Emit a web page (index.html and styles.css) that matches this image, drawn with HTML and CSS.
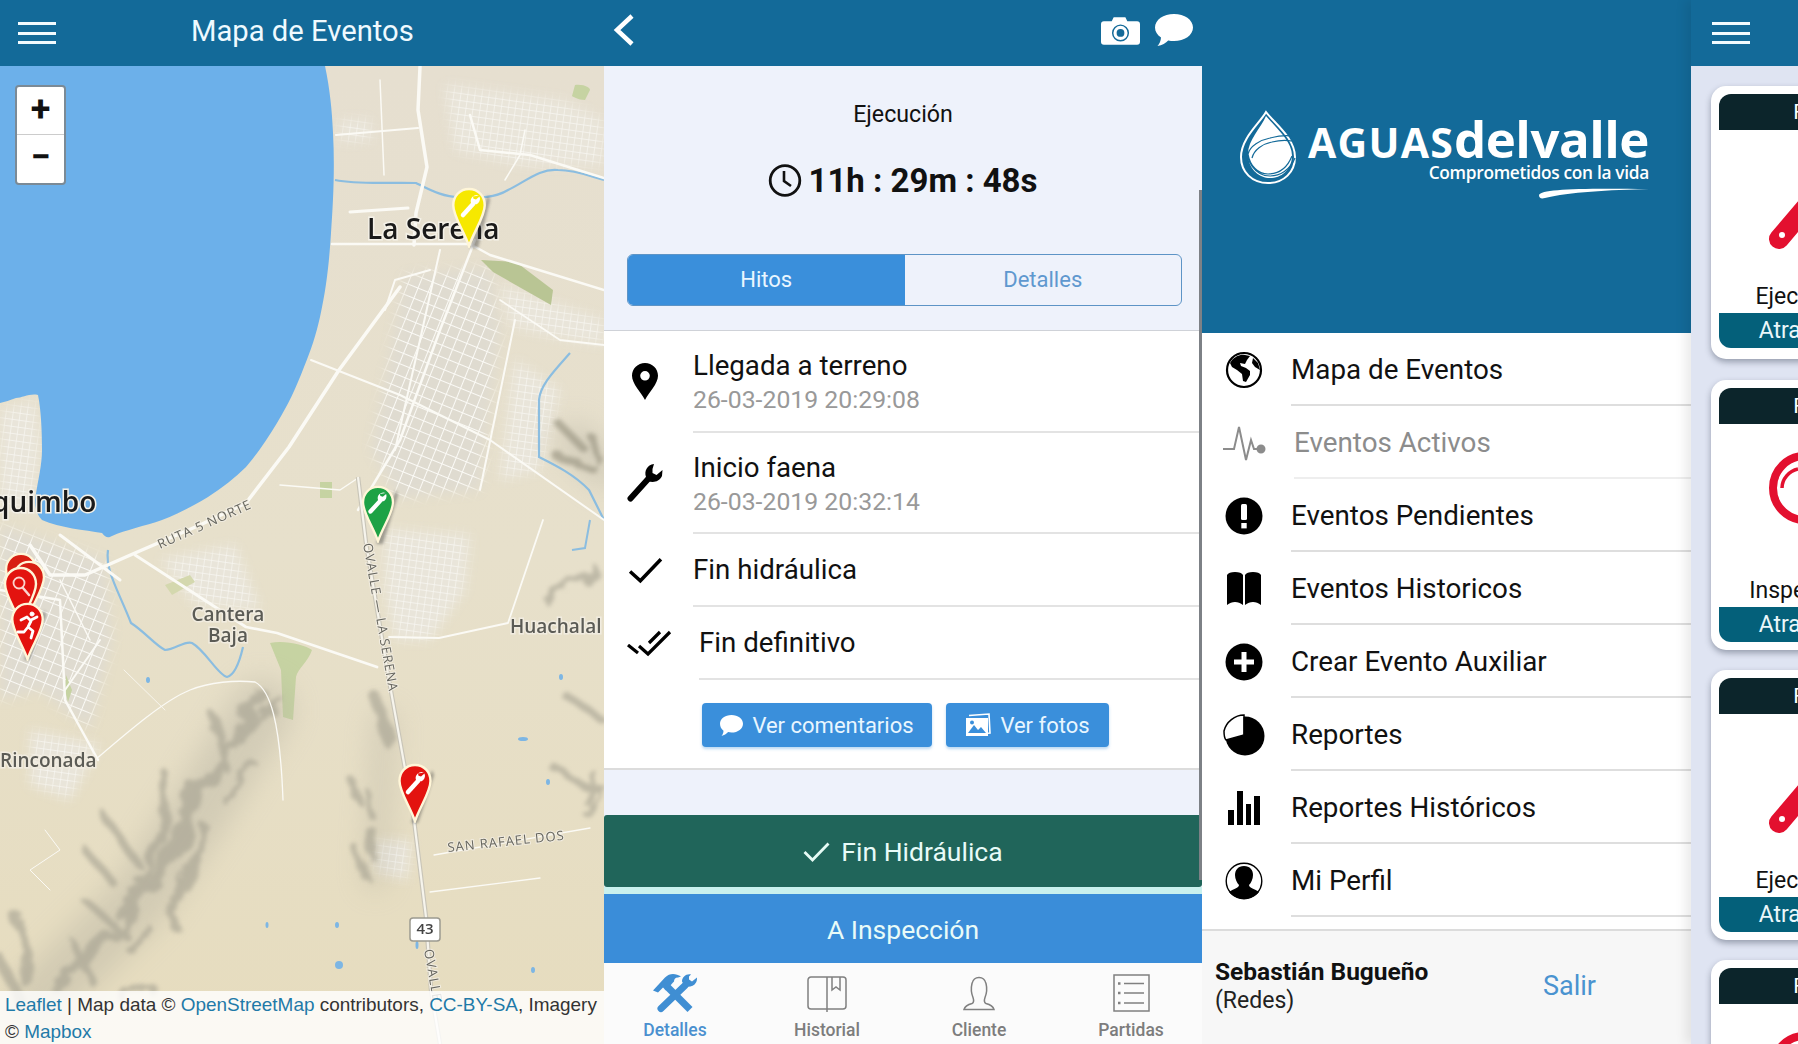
FILE: index.html
```html
<!DOCTYPE html>
<html lang="es">
<head>
  <meta charset="UTF-8">
  <title>Aguas del Valle</title>
  <link rel="stylesheet" href="styles.css">
</head>
<body>
  <svg class="defs" width="0" height="0">
    <defs>
      <symbol id="pin" viewBox="0 0 36 62">
        <path d="M18 2C8.500 2 2 9.500 2 18.500 2 30 13 45 18 60 23 45 34 30 34 18.500 34 9.500 27.500 2 18 2Z" stroke="#fff6d8" stroke-width="2.500"/>
      </symbol>
      <g id="pin-wrench">
        <path d="M11 29 21 18" stroke="#fff" stroke-width="4.500" stroke-linecap="round" fill="none"/>
        <path d="M27 9.500a6 6 0 0 0-8 7.500l5 1.500a6 6 0 0 0 3.500-8l-3.500 3-2.500-.8-.5-2.200Z" fill="#fff"/>
      </g>
      <symbol id="card-wrench" viewBox="0 0 100 100">
        <path d="M24 82 70 28" stroke="#e3102f" stroke-width="20" stroke-linecap="round"/>
        <circle cx="27" cy="78" r="3" fill="#fff"/>
      </symbol>
    </defs>
  </svg>

  <div class="screen">
    <!-- mapa -->
    <section class="panel-map">
      <header class="topbar">
        <div class="burger"><span></span><span></span><span></span></div>
        <h1 class="map-title">Mapa de Eventos</h1>
      </header>
      <div class="map">
        <svg class="map-canvas" viewBox="0 66 604 978" width="604" height="978">
          <defs>
            <linearGradient id="land" x1="0" y1="0" x2="0" y2="1">
              <stop offset="0" stop-color="#e6dfd0"/>
              <stop offset=".5" stop-color="#e7e0cb"/>
              <stop offset="1" stop-color="#e6dcbe"/>
            </linearGradient>
            <pattern id="grid" width="11" height="11" patternUnits="userSpaceOnUse" patternTransform="rotate(22)">
              <rect width="11" height="11" fill="#dfdbd0"/>
              <path d="M0 0H11M0 0V11" stroke="#fbfaf6" stroke-width="2"/>
            </pattern>
            <pattern id="grid-fine" width="7" height="7" patternUnits="userSpaceOnUse" patternTransform="rotate(8)">
              <rect width="7" height="7" fill="#e9e5da"/>
              <path d="M0 0H7M0 0V7" stroke="#f8f7f2" stroke-width="1.400"/>
            </pattern>
            <filter id="edge"><feGaussianBlur stdDeviation="6"/></filter>
            <mask id="city-mask" maskUnits="userSpaceOnUse" x="0" y="66" width="604" height="978">
              <g fill="#fff" filter="url(#edge)">
                <path d="M405 275 490 268 500 330 480 490 398 498 372 450Z"/>
                <path d="M0 525 105 560 112 640 90 730 40 690 0 700Z"/>
              </g>
            </mask>
            <mask id="fine-mask" maskUnits="userSpaceOnUse" x="0" y="66" width="604" height="978">
              <g fill="#fff" filter="url(#edge)">
                <path d="M445 85 560 100 604 120 604 165 520 165 455 150Z"/>
                <path d="M500 285 604 320 604 345 545 335 510 325Z"/>
                <path d="M385 530 470 535 465 590 430 640 395 640 385 590Z"/>
                <path d="M160 560 235 545 260 610 195 605Z"/>
                <path d="M0 410 35 400 40 450 32 510 0 510Z"/>
                <path d="M30 730 100 745 70 800 30 785Z"/>
                <path d="M375 840 412 840 408 880 375 872Z"/>
                <path d="M340 120 370 120 372 140 340 142Z"/>
                <path d="M515 360 560 390 540 470 500 480Z"/>
              </g>
            </mask>
            <filter id="hill" x="-10%" y="-10%" width="120%" height="120%">
              <feTurbulence type="fractalNoise" baseFrequency=".035" numOctaves="3" seed="4" result="n"/>
              <feDisplacementMap in="SourceGraphic" in2="n" scale="26" result="d"/>
              <feGaussianBlur in="d" stdDeviation="2.200"/>
            </filter>
            <filter id="hill-wide" x="-10%" y="-10%" width="120%" height="120%"><feGaussianBlur stdDeviation="14"/></filter>
            <filter id="pin-shadow"><feGaussianBlur stdDeviation="1.500"/></filter>
          </defs>

          <rect x="0" y="66" width="604" height="978" fill="url(#land)"/>

          <!-- barrios -->
          <rect x="0" y="66" width="604" height="978" fill="url(#grid)" mask="url(#city-mask)"/>
          <rect x="0" y="66" width="604" height="978" fill="url(#grid-fine)" mask="url(#fine-mask)"/>

          <!-- verdes -->
          <g fill="#c6d3a2">
            <path d="M270 643C285 640 305 645 312 650 308 662 298 668 296 677L293 720 283 717 281 670Z"/>
            <path d="M481 260 516 262 553 290 551 305 493 272Z" fill="#b9c594"/>
            <path d="M320 482h12v16h-12Z"/>
            <path d="M575 85C585 84 590 88 590 90L585 100C578 100 572 96 572 96Z"/>
            <path d="M66 675 72 690 68 702 65 690Z"/>
            <path d="M165 585 190 575 195 582 172 595Z" fill="#d4d8ae"/>
          </g>

          <!-- cerros -->
          <g fill="none" stroke="#b5b1a0" stroke-linecap="round" stroke-linejoin="round" filter="url(#hill-wide)" opacity=".4">
            <path d="M262 710 200 810 140 900 40 1000" stroke-width="62"/>
            <path d="M575 440 604 470" stroke-width="36"/>
            <path d="M385 720 375 880" stroke-width="22"/>
          </g>
          <g fill="none" stroke="#a6a292" stroke-linecap="round" stroke-linejoin="round" filter="url(#hill)" opacity=".62">
            <path d="M262 695 232 745 195 800 160 870 110 935 55 985" stroke-width="13"/>
            <path d="M212 715 228 770M240 740 280 700M250 760 225 800" stroke-width="7"/>
            <path d="M160 770 165 830 140 880" stroke-width="10"/>
            <path d="M108 820 135 860M85 850 115 885" stroke-width="8"/>
            <path d="M205 830 190 870 170 920" stroke-width="12"/>
            <path d="M90 905 125 935M70 940 95 985M130 950 150 930" stroke-width="7"/>
            <path d="M20 920 30 985M0 960 20 1000" stroke-width="12"/>
            <path d="M125 1000 150 985" stroke-width="8"/>
            <path d="M378 700 392 745" stroke-width="12"/>
            <path d="M352 780 358 800M366 790 370 815" stroke-width="6"/>
            <path d="M358 850 368 880M372 830 375 860" stroke-width="7"/>
            <path d="M560 425 580 445M585 430 600 462M555 455 595 470" stroke-width="8" stroke="#96927f"/>
            <path d="M548 600 595 570" stroke-width="9"/>
            <path d="M565 695 604 722" stroke-width="8"/>
            <path d="M555 770 604 790 585 812M590 770 585 800" stroke-width="7"/>
          </g>

          <!-- rios -->
          <g fill="none" stroke="#8bbde0" stroke-width="2.200">
            <path d="M335 180C360 185 390 182 416 183 430 190 445 198 462 197 480 198 495 198 508 190 525 182 540 168 558 170 575 170 590 176 604 180"/>
            <path d="M570 353C555 370 540 385 539 400L539 457C555 465 575 475 589 490L604 520"/>
            <path d="M108 550C105 570 118 590 131 623 145 632 155 645 165 650 175 650 185 640 192 643 205 650 218 675 227 677 235 675 240 660 243 647"/>
            <path d="M590 520 585 548 572 550" stroke-width="2"/>
          </g>
          <g fill="#7db6e4">
            <ellipse cx="339" cy="965" rx="4" ry="4"/>
            <ellipse cx="337" cy="925" rx="2" ry="3"/>
            <ellipse cx="523" cy="739" rx="5" ry="2"/>
            <ellipse cx="548" cy="782" rx="2" ry="3"/>
            <ellipse cx="561" cy="677" rx="2" ry="3"/>
            <ellipse cx="533" cy="970" rx="2" ry="3"/>
            <ellipse cx="148" cy="680" rx="2" ry="3"/>
            <ellipse cx="267" cy="925" rx="1.500" ry="3"/>
            <ellipse cx="417" cy="945" rx="1.500" ry="4"/>
          </g>

          <!-- mar -->
          <path fill="#6cb0ea" d="M0 66H325C330 90 332 110 333 133 335 170 333 205 331 233 329 265 326 290 320 317 316 335 311 350 304 367 296 388 288 405 277 423 268 438 258 453 246 467 235 478 222 488 208 497 195 505 178 514 162 520 145 526 125 530 112 536 108 538 106 538 102 533 85 530 60 528 42 520 37 515 35 508 35 500 38 480 42 465 42 450 42 430 41 410 38 395 30 393 22 398 16 398 10 400 5 402 0 403Z"/>

          <!-- caminos -->
          <g fill="none" stroke="#fbfaf5" stroke-linecap="round" stroke-linejoin="round">
            <path d="M400 287 339 370 289 447 246 503 200 525 135 553 85 575 50 575 30 545" stroke-width="3.500"/>
            <path d="M420 67 418 110 427 167 416 213 414 245" stroke-width="3.500"/>
            <path d="M332 244H470L490 255 604 290" stroke-width="2.500"/>
            <path d="M336 135 418 128" stroke-width="2.200"/>
            <path d="M380 80 384 175" stroke-width="1.500"/>
            <path d="M470 115 480 150 530 155 604 178" stroke-width="2.500"/>
            <path d="M525 130 520 155 505 180" stroke-width="1.500"/>
            <path d="M350 212 408 208" stroke-width="3"/>
            <path d="M311 360 400 395 490 440 604 520" stroke-width="2"/>
            <path d="M475 240 440 330 400 440 358 510" stroke-width="2.500"/>
            <path d="M515 320 480 490" stroke-width="2"/>
            <path d="M440 250 420 340 395 450" stroke-width="2"/>
            <path d="M430 270 395 280 385 310" stroke-width="2"/>
            <path d="M500 300 560 340 604 345" stroke-width="1.800"/>
            <path d="M280 485 340 490 358 478" stroke-width="1.500"/>
            <path d="M135 555 246 627 277 633 377 667" stroke-width="2.800"/>
            <path d="M389 637 439 638 508 623 543 520" stroke-width="1.800"/>
            <path d="M0 590 60 600 65 700 98 760" stroke-width="2.500"/>
            <path d="M95 760C130 730 165 700 190 690 210 682 235 680 255 682 270 690 280 720 283 800" stroke-width="1.300"/>
            <path d="M100 640 65 690" stroke-width="2"/>
            <path d="M60 535 120 580" stroke-width="3"/>
            <path d="M60 580 90 640" stroke-width="1.500"/>
            <path d="M434 855 590 828M430 892 540 878" stroke-width="1.300"/>
            <path d="M124 670 165 710" stroke-width=".8"/>
            <path d="M45 830 60 850 30 870 50 890" stroke-width="1"/>
          </g>
          <path d="M358 477 366 543 389 680 404 763 414 820 426 917 431 990 440 1044" fill="none" stroke="#c9c5b8" stroke-width="4.500"/>
          <path d="M358 477 366 543 389 680 404 763 414 820 426 917 431 990 440 1044" fill="none" stroke="#f6f4ec" stroke-width="2.200"/>

          <!-- nombres -->
          <g class="map-label-city">
            <text x="367" y="239">La Serena</text>
            <text x="-8" y="512">quimbo</text>
          </g>
          <g class="map-label-town">
            <text x="228" y="621" text-anchor="middle">Cantera</text>
            <text x="228" y="642" text-anchor="middle">Baja</text>
            <text x="510" y="633">Huachalal</text>
            <text x="0" y="767">Rinconada</text>
          </g>
          <g class="map-label-road">
            <text transform="translate(160 549) rotate(-24)">RUTA 5 NORTE</text>
            <text transform="translate(363 544) rotate(80)">OVALLE — LA SERENA</text>
            <text transform="translate(448 852) rotate(-6)">SAN RAFAEL DOS</text>
            <text transform="translate(424 950) rotate(80)">OVALLE</text>
          </g>
          <rect x="410" y="918" width="30" height="23" rx="3" fill="#fff" stroke="#9c9a90" stroke-width="1.500"/>
          <text class="map-shield" x="425" y="934" text-anchor="middle">43</text>

          <!-- marcadores -->
          <g fill="#333" opacity=".4" filter="url(#pin-shadow)">
            <path d="M490 200 478 248 470 248 488 195Z"/>
            <path d="M398 495 383 544 376 544 396 490Z"/>
            <path d="M434 775 418 823 411 823 432 770Z"/>
            <path d="M46 615 30 660 24 660 44 610Z"/>
          </g>
          <use href="#pin" x="4" y="552" width="34" height="58" fill="#d81f12"/>
          <use href="#pin" x="12" y="560" width="34" height="58" fill="#d81f12"/>
          <use href="#pin" x="3" y="566" width="35" height="60" fill="#e3130f"/>
          <circle cx="19" cy="583" r="5.500" fill="none" stroke="#fbd5cf" stroke-width="1.800"/>
          <path d="M23 588 29 595" stroke="#fbd5cf" stroke-width="2.500" stroke-linecap="round"/>
          <use href="#pin" x="10" y="602" width="35" height="59" fill="#e3130f"/>
          <g fill="none" stroke="#fff" stroke-width="2.800" stroke-linecap="round" stroke-linejoin="round">
            <circle cx="32" cy="614" r="2" fill="#fff" stroke-width="1"/>
            <path d="M21 620 27 617 31 621 28 627 33 631 31 638M28 627 24 632 18 632M31 620 37 617"/>
          </g>
          <use href="#pin" x="450" y="187" width="38" height="61" fill="#f6e800"/>
          <use href="#pin" x="360" y="485" width="36" height="58" fill="#1ea245"/>
          <use href="#pin" x="397" y="763" width="36" height="60" fill="#e3130f"/>
          <use href="#pin-wrench" transform="translate(452 186)"/>
          <use href="#pin-wrench" transform="translate(360 484) scale(.95)"/>
          <use href="#pin-wrench" transform="translate(397 763)"/>
        </svg>
        <div class="zoom-box">
          <div class="zoom-btn">+</div>
          <div class="zoom-btn">&minus;</div>
        </div>
        <div class="attribution">
          <a>Leaflet</a> | Map data © <a>OpenStreetMap</a> contributors, <a>CC-BY-SA</a>, Imagery<br>© <a>Mapbox</a>
        </div>
      </div>
    </section>

    <!-- detalle del evento -->
    <section class="panel-detail">
      <header class="topbar topbar-detail">
        <svg width="22" height="32" viewBox="0 0 22 32"><path d="M19 2 4 16l15 14" fill="none" stroke="#fff" stroke-width="4.500"/></svg>
        <div class="topbar-actions">
          <svg width="39" height="29" viewBox="0 0 40 29">
            <path d="M3 5h8l2-4h12l2 4h10a3 3 0 0 1 3 3v18a3 3 0 0 1-3 3H3a3 3 0 0 1-3-3V8a3 3 0 0 1 3-3Z" fill="#fff"/>
            <circle cx="20" cy="17" r="8" fill="none" stroke="#136a99" stroke-width="1.500"/>
            <circle cx="20" cy="17" r="4" fill="#136a99"/>
          </svg>
          <svg width="38" height="32" viewBox="0 0 38 32">
            <path d="M19 0c10.500 0 19 5.800 19 13.500S29.500 27 19 27c-2 0-4-.2-5.800-.6C11 28.800 7 31.500 2.500 32c2-2 3.300-5 3.500-8.500C2.300 21 0 17.500 0 13.500 0 5.800 8.500 0 19 0Z" fill="#fff"/>
          </svg>
        </div>
      </header>

      <div class="status-box">
        <div class="status-name">Ejecución</div>
        <div class="timer">
          <svg width="34" height="33" viewBox="0 0 34 33"><circle cx="17" cy="16.500" r="14.800" fill="none" stroke="#111" stroke-width="2.800"/><path d="M16 7v10l7 5" fill="none" stroke="#111" stroke-width="2.600"/></svg>
          <span>11h : 29m : 48s</span>
        </div>
        <div class="segment">
          <div class="segment-item segment-on">Hitos</div>
          <div class="segment-item">Detalles</div>
        </div>
      </div>

      <ul class="milestones">
        <li class="milestone milestone-tall">
          <div class="milestone-icon">
            <svg width="26" height="37" viewBox="0 0 26 37"><path fill-rule="evenodd" d="M13 0C5.800 0 0 5.500 0 12.800 0 21 9 29 13 37c4-8 13-16 13-24.200C26 5.500 20.200 0 13 0Zm0 8a4.800 4.800 0 1 1 0 9.600A4.800 4.800 0 0 1 13 8Z" fill="#000"/></svg>
          </div>
          <div class="milestone-body">
            <div class="milestone-title">Llegada a terreno</div>
            <div class="milestone-date">26-03-2019 20:29:08</div>
          </div>
        </li>
        <li class="milestone milestone-tall">
          <div class="milestone-icon">
            <svg width="36" height="38" viewBox="0 0 36 38"><path d="M3.500 34.500 22 14" stroke="#000" stroke-width="6" stroke-linecap="round"/><path d="M27 0C20 1 17 7 19 13l2 4c5 2 11 1 14-5l.5-6-6 5-4-2V5Z" fill="#000"/></svg>
          </div>
          <div class="milestone-body">
            <div class="milestone-title">Inicio faena</div>
            <div class="milestone-date">26-03-2019 20:32:14</div>
          </div>
        </li>
        <li class="milestone milestone-short">
          <div class="milestone-icon">
            <svg width="35" height="27" viewBox="0 0 34 26"><path d="M2 14l10 9L32 2" fill="none" stroke="#000" stroke-width="3.400"/></svg>
          </div>
          <div class="milestone-body">
            <div class="milestone-title">Fin hidráulica</div>
          </div>
        </li>
        <li class="milestone milestone-short milestone-wide">
          <div class="milestone-icon">
            <svg width="45" height="27" viewBox="0 0 45 27"><path d="M1 15l10 8M12 16l9 8L43 2M22 13 33 2" fill="none" stroke="#000" stroke-width="3.200"/></svg>
          </div>
          <div class="milestone-body">
            <div class="milestone-title">Fin definitivo</div>
          </div>
        </li>
      </ul>

      <div class="detail-actions">
        <button class="pill pill-comments" type="button">
          <svg width="23" height="21" viewBox="0 0 23 21"><path d="M11.500 0C18 0 23 3.700 23 8.700S18 17.500 11.500 17.500c-1.200 0-2.300-.1-3.400-.4C6.500 19 4 20.500 1.500 21c1.200-1.400 2-3.300 2-5.300C1.300 14 0 11.500 0 8.700 0 3.700 5 0 11.500 0Z" fill="#fff"/></svg>
          Ver comentarios
        </button>
        <button class="pill pill-photos" type="button">
          <svg width="26" height="24" viewBox="0 0 26 24"><path d="M4 2.500 24 1l1 19-2 .3" fill="none" stroke="#fff" stroke-width="1.600"/><rect x="1" y="5" width="22" height="18" fill="#fff"/><path d="M3 20l6-8 4 5 3-3 5 6Z" fill="#3a8fdb"/><circle cx="7" cy="9.500" r="2" fill="#3a8fdb"/></svg>
          Ver fotos
        </button>
      </div>

      <div class="detail-spacer"></div>

      <button class="action action-green" type="button">
        <svg width="27" height="20" viewBox="0 0 27 20"><path d="M1.500 10l8 8L25.500 1.500" fill="none" stroke="#e6fbf5" stroke-width="2.800"/></svg>
        Fin Hidráulica
      </button>
      <div class="action-gap"></div>
      <button class="action action-blue" type="button">A Inspección</button>

      <nav class="tabs">
        <div class="tab tab-on">
          <svg width="46" height="39" viewBox="0 0 46 39">
            <path d="M15 13 38 36" stroke="#3f8ed3" stroke-width="7"/>
            <path d="M1 17 13 4C18-1 24 0 29 3l-3 1c-3 0-4 2-4 4l-1 1-7 8-3-3-5 5Z" fill="#3f8ed3"/>
            <path d="M33 12 9 35" stroke="#3f8ed3" stroke-width="7" stroke-linecap="round"/>
            <path d="M39 1c-5-1-9 3-9 7l3 5c4 1 9 0 11-4 1-2 1-3 1-5l-5 4-3-2V3Z" fill="#3f8ed3"/>
          </svg>
          <span>Detalles</span>
        </div>
        <div class="tab">
          <svg width="40" height="38" viewBox="0 0 40 38" fill="none" stroke="#808080" stroke-width="1.500"><path d="M20 3H4a3 3 0 0 0-3 3v26a3 3 0 0 0 3 3h32a3 3 0 0 0 3-3V6a3 3 0 0 0-3-3H20v35"/><path d="M25 3v13l4-3 4 3V3"/></svg>
          <span>Historial</span>
        </div>
        <div class="tab">
          <svg width="32" height="36" viewBox="0 0 32 36" fill="none" stroke="#808080" stroke-width="1.500"><path d="M1 34.500h30c-1-3.500-4-5-8-6-2-1-2-3-1-6 2-5 2-10 1-14-1-4-4-6-7-6s-6 2-7 6c-1 4-1 9 1 14 1 3 1 5-1 6-4 1-7 2.500-8 6Z"/></svg>
          <span>Cliente</span>
        </div>
        <div class="tab">
          <svg width="37" height="38" viewBox="0 0 37 38" fill="none" stroke="#808080" stroke-width="1.500"><rect x="1" y="1" width="35" height="36"/><path d="M11 9.500h20M11 19h20M11 29h20"/><path d="M5 9.500h2.500M5 19h2.500M5 29h2.500" stroke-width="2.500"/></svg>
          <span>Partidas</span>
        </div>
      </nav>
      <div class="scroll-thumb"></div>
    </section>

    <!-- menu lateral -->
    <section class="panel-menu">
      <div class="menu-brand">
        <svg class="brand-drop" width="56" height="74" viewBox="0 0 56 74" fill="none" stroke="#fff">
          <path d="M26 2C20 13 1 28 1 47c0 15 11 26 27 26s27-11 27-26C55 28 34 13 26 2Z" fill="#136a99" stroke-width="2"/>
          <path d="M26 6C21 18 8 30 8 44c0 14 10 23 20 24 12 1 23-7 24-21C53 32 36 18 26 6Z" fill="#fff" stroke-width="0"/>
          <path d="M8 44c2-8 12-14 22-16 8-2 16-3 22-2M12 48c2-8 10-14 20-16 8-2 14-2 20-1M8 44c2 12 10 20 20 20 12 0 20-8 24-18M6 36c0 14 8 30 24 30 10 0 20-6 25-18" stroke="#136a99" stroke-width="1.200"/>
        </svg>
        <div class="brand-text">
          <div class="brand-name"><span class="brand-aguas">AGUAS</span><span class="brand-valle">delvalle</span></div>
          <div class="brand-tag">Comprometidos con la vida</div>
          <svg class="brand-swoosh" width="110" height="12" viewBox="0 0 110 12"><path d="M0 8C2 2 40 1 110 2 70 3 30 5 6 11 2 12 0 11 0 8Z" fill="#fff"/></svg>
        </div>
      </div>

      <ul class="menu-list">
        <li class="menu-item">
          <div class="menu-icon">
            <svg width="38" height="38" viewBox="0 0 38 38"><circle cx="19" cy="19" r="17" fill="#fff" stroke="#000" stroke-width="2.200"/><path d="M7 9c3-3 8-6 13-5l5 1-3 4-2 4-5-1 1 3 5 2 4 3v4l-4 7-3-1-1-7-5-4-5-3-2-4Z" fill="#000"/><path d="M28 7l5 5 2 7-5-3-3-4Z" fill="#000"/></svg>
          </div>
          <div class="menu-label">Mapa de Eventos</div>
        </li>
        <li class="menu-item menu-item-muted">
          <div class="menu-icon">
            <svg width="44" height="38" viewBox="0 0 44 38" fill="none" stroke="#8c8c8c" stroke-width="2"><path d="M0 25h11l5-22 7 33 5-20 3 9h8"/><circle cx="38" cy="25" r="3.500" fill="#8c8c8c"/></svg>
          </div>
          <div class="menu-label">Eventos Activos</div>
        </li>
        <li class="menu-item">
          <div class="menu-icon">
            <svg width="38" height="38" viewBox="0 0 38 38"><circle cx="19" cy="19" r="18.500" fill="#000"/><rect x="16" y="7" width="6" height="16" rx="1.500" fill="#fff"/><rect x="16.300" y="26" width="5.400" height="5.400" fill="#fff"/></svg>
          </div>
          <div class="menu-label">Eventos Pendientes</div>
        </li>
        <li class="menu-item">
          <div class="menu-icon">
            <svg width="36" height="36" viewBox="0 0 36 36"><path d="M17 4v30C12 30 6 30 1 34V4c1-2 4-3 8-3s7 1 8 3ZM19 4v30c5-4 11-4 16 0V4c-1-2-4-3-8-3s-7 1-8 3Z" fill="#000"/></svg>
          </div>
          <div class="menu-label">Eventos Historicos</div>
        </li>
        <li class="menu-item">
          <div class="menu-icon">
            <svg width="38" height="38" viewBox="0 0 38 38"><circle cx="19" cy="19" r="18.500" fill="#000"/><path d="M19 9v20M9 19h20" stroke="#fff" stroke-width="5"/></svg>
          </div>
          <div class="menu-label">Crear Evento Auxiliar</div>
        </li>
        <li class="menu-item">
          <div class="menu-icon">
            <svg width="42" height="42" viewBox="0 0 42 42"><circle cx="22" cy="22" r="19.500" fill="#000"/><path d="M21 1C12 1 3 8 1 17 1 22 2 25 3 26L21 21Z" fill="#fff" stroke="#000" stroke-width="1.500"/><path d="M21 3v18" stroke="#000" stroke-width="1"/></svg>
          </div>
          <div class="menu-label">Reportes</div>
        </li>
        <li class="menu-item">
          <div class="menu-icon">
            <svg width="34" height="36" viewBox="0 0 34 36" fill="#000"><rect x="1" y="20" width="6" height="15"/><rect x="10" y="1" width="6" height="34"/><rect x="19" y="14" width="5" height="21"/><rect x="27" y="6" width="6" height="29"/></svg>
          </div>
          <div class="menu-label">Reportes Históricos</div>
        </li>
        <li class="menu-item">
          <div class="menu-icon">
            <svg width="38" height="38" viewBox="0 0 38 38"><circle cx="19" cy="19" r="17.800" fill="#fff" stroke="#000" stroke-width="1.400"/><path d="M19 4c6 0 9 4 9 9 0 4-2 8-4 10 0 3 6 4 10 7-3 4-9 7-15 7s-12-3-15-7c4-3 10-4 10-7-2-2-4-6-4-10 0-5 3-9 9-9Z" fill="#000"/></svg>
          </div>
          <div class="menu-label">Mi Perfil</div>
        </li>
      </ul>

      <div class="menu-user">
        <div>
          <div class="user-name">Sebastián Bugueño</div>
          <div class="user-role">(Redes)</div>
        </div>
        <a class="user-exit">Salir</a>
      </div>
    </section>

    <!-- lista de eventos -->
    <section class="panel-cards">
      <header class="topbar">
        <div class="burger"><span></span><span></span><span></span></div>
      </header>
      <div class="cards">
        <article class="card card-tall">
          <div class="card-head">F1</div>
          <div class="card-icon"><svg width="100" height="100"><use href="#card-wrench"/></svg></div>
          <div class="card-name">Ejecución</div>
          <div class="card-status">Atrasado</div>
        </article>
        <article class="card">
          <div class="card-head">F2</div>
          <div class="card-icon">
            <svg width="100" height="100" viewBox="0 0 100 100" fill="none" stroke="#e3102f"><circle cx="50" cy="37" r="32" stroke-width="8"/><path d="M27 37c0-9 7-17 16-19" stroke-width="3.500"/></svg>
          </div>
          <div class="card-name">Inspección</div>
          <div class="card-status">Atrasado</div>
        </article>
        <article class="card">
          <div class="card-head">F3</div>
          <div class="card-icon"><svg width="100" height="100"><use href="#card-wrench"/></svg></div>
          <div class="card-name">Ejecución</div>
          <div class="card-status">Atrasado</div>
        </article>
        <article class="card">
          <div class="card-head">F4</div>
          <div class="card-icon">
            <svg width="100" height="100" viewBox="0 0 100 100" fill="none" stroke="#e3102f"><circle cx="50" cy="37" r="32" stroke-width="8"/></svg>
          </div>
          <div class="card-name">Inspección</div>
          <div class="card-status">Atrasado</div>
        </article>
      </div>
    </section>
  </div>
</body>
</html>
```

FILE: styles.css
```css
* {
  box-sizing: border-box;
}

body {
  margin: 0;
  font-family: Roboto, "Liberation Sans", sans-serif;
  color: #111;
  background-color: #fff;
}

ul {
  list-style: none;
  margin: 0;
  padding: 0;
}

button {
  font-family: inherit;
  border: 0;
}

.defs {
  position: absolute;
}

.screen {
  display: flex;
  width: 1798px;
  height: 1044px;
  overflow: hidden;
}

.topbar {
  display: flex;
  align-items: center;
  height: 66px;
  background-color: #136a99;
  flex-shrink: 0;
}

.burger {
  display: flex;
  flex-direction: column;
  justify-content: space-between;
  width: 38px;
  height: 22px;
  margin-left: 18px;
}

.burger span {
  height: 3px;
  background-color: #f2fbff;
}

/* mapa */
.panel-map {
  width: 604px;
  flex-shrink: 0;
}

.map-title {
  margin: -5px 0 0 135px;
  font-size: 29.200px;
  font-weight: 400;
  color: #effaff;
}

.map {
  position: relative;
  height: 978px;
  overflow: hidden;
}

.map-canvas {
  display: block;
  filter: blur(0.4px);
}

.map-label-city text {
  font-family: "Open Sans", sans-serif;
  font-size: 28px;
  font-weight: 600;
  fill: #1a1a1a;
  stroke: #f4f1e8;
  stroke-width: 3px;
  paint-order: stroke;
}

.map-label-town text {
  font-family: "Open Sans", sans-serif;
  font-size: 19px;
  font-weight: 600;
  fill: #5b5b55;
  stroke: #f1ece0;
  stroke-width: 3px;
  paint-order: stroke;
}

.map-label-road text {
  font-family: "Open Sans", sans-serif;
  font-size: 13px;
  letter-spacing: 1px;
  fill: #66665f;
  stroke: #f1ece0;
  stroke-width: 2px;
  paint-order: stroke;
}

.map-shield {
  font-family: "Open Sans", sans-serif;
  font-size: 15px;
  font-weight: 600;
  fill: #444;
}

.zoom-box {
  position: absolute;
  left: 15px;
  top: 19px;
  width: 51px;
  height: 100px;
  background-color: #fff;
  border: 2px solid #7b8a96;
  border-radius: 4px;
}

.zoom-btn {
  height: 48px;
  font-size: 36px;
  font-weight: 700;
  line-height: 44px;
  text-align: center;
  color: #111;
}

.zoom-btn:first-child {
  border-bottom: 1px solid #ccc;
}

.attribution {
  position: absolute;
  left: 0;
  right: 0;
  bottom: 0;
  height: 53px;
  padding: 0 0 0 5px;
  font-family: "Liberation Sans", Arial, sans-serif;
  font-size: 18.950px;
  line-height: 27px;
  color: #333;
  background-color: rgba(255, 255, 255, 0.82);
}

.attribution a {
  color: #1f7aa8;
}

/* detalle */
.panel-detail {
  position: relative;
  display: flex;
  flex-direction: column;
  width: 598px;
  flex-shrink: 0;
  background-color: #eef2fb;
}

.topbar-detail {
  justify-content: space-between;
  padding: 0 9px 6px 9px;
}

.topbar-actions {
  display: flex;
  align-items: center;
  gap: 15px;
}

.status-box {
  height: 265px;
  padding-top: 34px;
  text-align: center;
  border-bottom: 1px solid #cfd2d8;
}

.status-name {
  font-size: 23.200px;
  line-height: 28px;
}

.timer {
  display: flex;
  justify-content: center;
  align-items: center;
  gap: 6px;
  height: 40px;
  margin-top: 32px;
  font-size: 33px;
  font-weight: 700;
}

.segment {
  display: flex;
  width: 555px;
  height: 52px;
  margin: 54px 0 0 23px;
  border: 1px solid #5d94c6;
  border-radius: 6px;
  overflow: hidden;
}

.segment-item {
  flex: 1;
  font-size: 22px;
  line-height: 50px;
  color: #5f98cf;
}

.segment-on {
  background-color: #3a8fdb;
  color: #e9f6ff;
}

.milestones {
  background-color: #fff;
}

.milestone {
  display: flex;
}

.milestone-icon {
  display: flex;
  justify-content: center;
  align-items: center;
  width: 89px;
  padding-right: 7px;
  flex-shrink: 0;
}

.milestone-body {
  flex: 1;
  padding-top: 18px;
  border-bottom: 2px solid #e3e3e3;
}

.milestone-tall {
  height: 101.500px;
}

.milestone-short {
  height: 73px;
}

.milestone-short .milestone-body {
  display: flex;
  align-items: center;
  padding-top: 0;
}

.milestone-wide .milestone-icon {
  width: 95px;
  padding-right: 4px;
}

.milestone-title {
  font-size: 27.700px;
  line-height: 34px;
  color: #111;
}

.milestone-date {
  font-size: 24.800px;
  line-height: 34px;
  color: #999;
}

.detail-actions {
  display: flex;
  gap: 14px;
  height: 90px;
  padding: 23px 0 0 98px;
  background-color: #fff;
  border-bottom: 2px solid #dcdcdc;
}

.pill {
  display: flex;
  justify-content: center;
  align-items: center;
  gap: 9px;
  height: 44px;
  font-size: 22px;
  color: #e9f6ff;
  background-color: #3a8fdb;
  border-radius: 4px;
  box-shadow: 0 2px 3px rgba(58, 143, 219, 0.35);
}

.pill-comments {
  width: 230px;
}

.pill-photos {
  width: 163px;
}

.detail-spacer {
  height: 45px;
}

.action {
  display: flex;
  justify-content: center;
  align-items: center;
  gap: 11px;
  width: 100%;
  padding-top: 2px;
  font-size: 26.500px;
  color: #e8fbf8;
}

.action-green {
  height: 72px;
  background-color: #20655a;
  border-radius: 3px;
}

.action-gap {
  height: 7px;
  background-color: #c9f1ee;
}

.action-blue {
  height: 69px;
  background-color: #3a8dd9;
}

.tabs {
  display: flex;
  flex: 1;
  background-color: #fbfbfb;
  justify-content: center;
}

.tab {
  display: flex;
  flex-direction: column;
  align-items: center;
  width: 152px;
  height: 81px;
  padding-top: 10px;
  flex-shrink: 0;
  font-size: 17.500px;
  font-weight: 500;
  color: #7d7d7d;
}

.tab svg {
  height: 40px;
}

.tab span {
  margin-top: 7px;
}

.tab-on {
  color: #4a90cf;
}

.scroll-thumb {
  position: absolute;
  right: 0;
  top: 190px;
  width: 3px;
  height: 690px;
  background-color: #7d8186;
}

/* menu */
.panel-menu {
  display: flex;
  flex-direction: column;
  width: 489px;
  flex-shrink: 0;
  background-color: #fff;
}

.menu-brand {
  display: flex;
  align-items: flex-start;
  gap: 14px;
  height: 334px;
  padding: 110px 0 0 38px;
  background-color: #136a99;
}

.brand-text {
  display: flex;
  flex-direction: column;
  align-items: flex-end;
  width: 339px;
  margin-top: 5px;
  color: #fff;
}

.brand-name {
  display: flex;
  align-items: baseline;
  height: 47px;
  line-height: 47px;
  font-family: "Open Sans", sans-serif;
  font-weight: 700;
}

.brand-aguas {
  font-size: 41px;
  letter-spacing: 1.200px;
}

.brand-valle {
  font-size: 51px;
  letter-spacing: -0.5px;
}

.brand-tag {
  margin-top: -1px;
  font-family: "Open Sans", sans-serif;
  font-size: 17.300px;
  font-weight: 600;
  line-height: 24px;
  letter-spacing: -0.3px;
}

.brand-swoosh {
  margin-top: 2px;
}

.menu-list {
  flex: 1;
}

.menu-item {
  display: flex;
  height: 73px;
}

.menu-icon {
  display: flex;
  justify-content: center;
  align-items: center;
  width: 89px;
  padding-right: 5px;
  flex-shrink: 0;
}

.menu-label {
  flex: 1;
  display: flex;
  align-items: center;
  padding-top: 1px;
  font-size: 27.800px;
  color: #111;
  border-bottom: 2px solid #dedede;
}

.menu-item-muted .menu-icon {
  width: 92px;
  padding-right: 6px;
}

.menu-item-muted .menu-label {
  color: #8c8c8c;
  border-bottom-color: #eee;
}

.menu-user {
  display: flex;
  justify-content: space-between;
  align-items: center;
  height: 115px;
  margin-top: 12px;
  padding: 0 95px 4px 13px;
  background-color: #f7f7f7;
  border-top: 2px solid #dcdcdc;
}

.user-name {
  font-size: 24.500px;
  font-weight: 700;
  line-height: 29px;
}

.user-role {
  font-size: 23px;
  line-height: 29px;
  color: #222;
}

.user-exit {
  font-size: 27px;
  color: #4a93d0;
}

/* tarjetas */
.panel-cards {
  position: relative;
  display: flex;
  flex-direction: column;
  width: 107px;
  flex-shrink: 0;
  background-color: #dfe4f2;
  box-shadow: -6px 0 10px rgba(0, 0, 0, 0.08);
  overflow: hidden;
}

.panel-cards .burger {
  margin-left: 21px;
}

.cards {
  display: flex;
  flex-direction: column;
  gap: 20px;
  padding: 20px 0 0 20px;
}

.card {
  display: flex;
  flex-direction: column;
  width: 188px;
  height: 270px;
  flex-shrink: 0;
  padding: 8px;
  background-color: #fff;
  border-radius: 15px;
  box-shadow: 0 3px 6px rgba(40, 50, 70, 0.4);
}

.card-tall {
  height: 273px;
  padding-bottom: 11px;
  margin-bottom: 1px;
}

.card-head {
  height: 36px;
  font-size: 21px;
  line-height: 36px;
  text-align: center;
  color: #fff;
  background-color: #0c252b;
  border-radius: 12px 12px 0 0;
}

.card-icon {
  display: flex;
  flex: 1;
  justify-content: center;
  align-items: center;
}

.card-name {
  height: 26px;
  font-size: 23px;
  line-height: 26px;
  text-align: center;
}

.card-status {
  height: 35px;
  margin-top: 3px;
  font-size: 23px;
  line-height: 35px;
  text-align: center;
  color: #eaf7fb;
  background-color: #04607a;
  border-radius: 0 0 12px 12px;
}
```
